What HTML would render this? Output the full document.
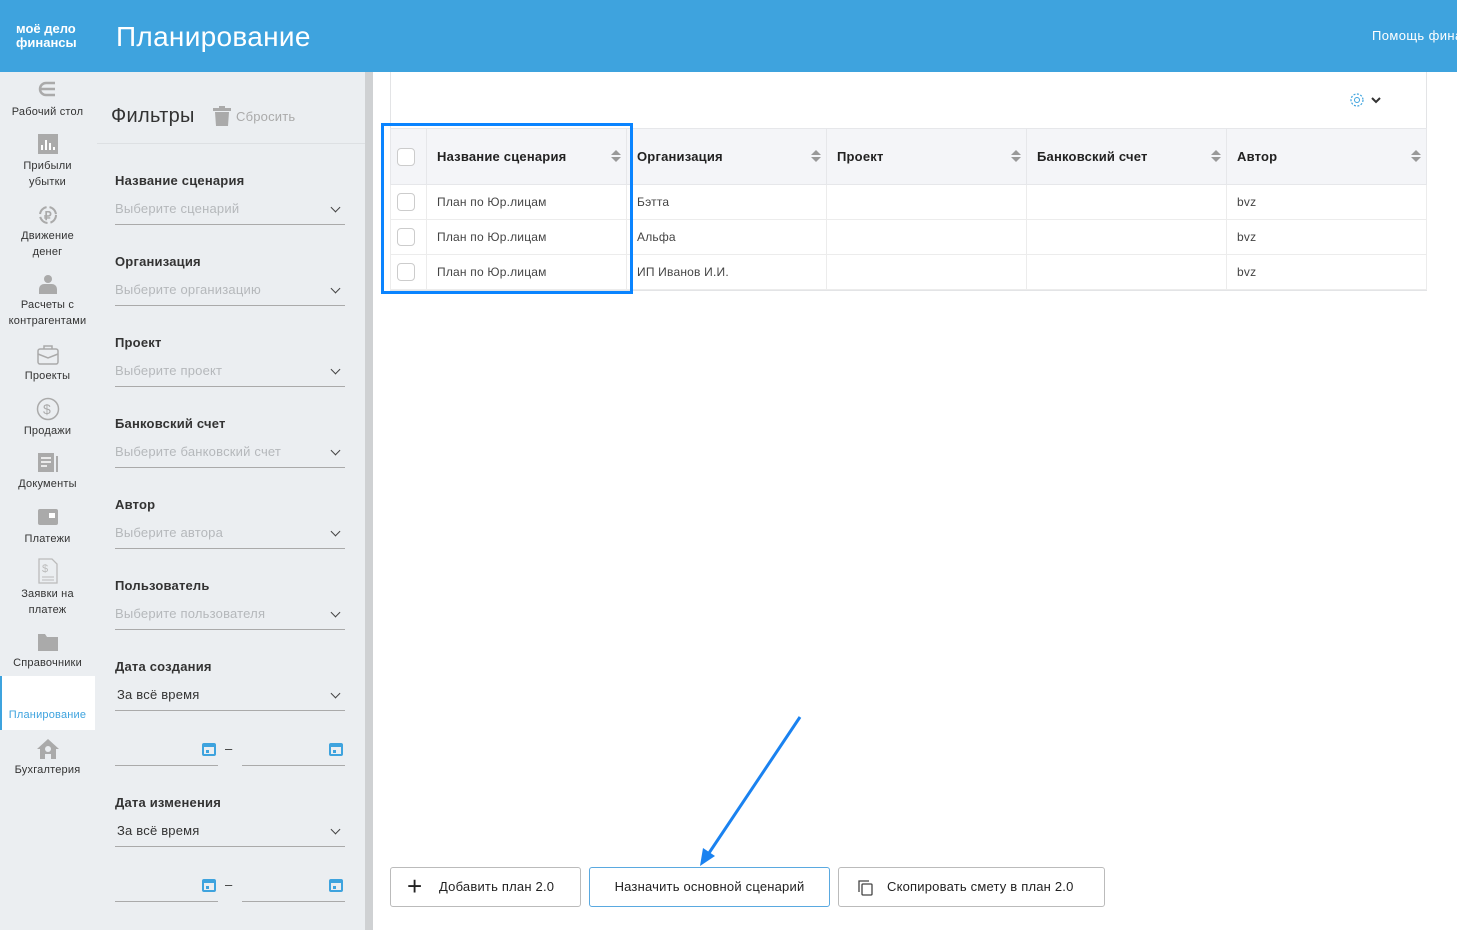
<!DOCTYPE html>
<html><head><meta charset="utf-8"><style>
*{box-sizing:border-box;margin:0;padding:0}
body{width:1457px;height:930px;overflow:hidden;background:#fff;font-family:"Liberation Sans","Noto Sans CJK SC",sans-serif;position:relative;color:#333}
.abs{position:absolute}
.hdr{left:0;top:0;width:1457px;height:72px;background:#3ea3de}
.nav{left:0;top:72px;width:97px;height:858px;background:#ebeef1}
.flt{left:97px;top:72px;width:268px;height:858px;background:#ebeef1}
.sb{left:365px;top:72px;width:8px;height:858px;background:#cfd1d3}
.ni{position:absolute;left:0;width:95px;text-align:center;font-size:11px;color:#333;line-height:16px;letter-spacing:0.2px}
.ni svg{display:block;margin:0 auto 2px}
.lbl{position:absolute;left:115px;font-size:13px;font-weight:bold;color:#333;letter-spacing:0.2px}
.sel{position:absolute;left:115px;width:230px;height:30px;border-bottom:1px solid #aaa;font-size:13px;color:#b5b8bb;line-height:28px;letter-spacing:0.2px}
.sel:after{content:"";position:absolute;right:6px;top:9px;width:6px;height:6px;border-right:1.3px solid #444;border-bottom:1.3px solid #444;transform:rotate(45deg)}
.dt{position:absolute;height:22px;border-bottom:1px solid #aaa;width:103px}
.cal{position:absolute;width:14px;height:13px;border:2px solid #3ea3de;border-top-width:4px;border-radius:2px}
.cal:after{content:"";position:absolute;left:2px;top:3px;width:3px;height:3px;background:#3ea3de}
table{border-collapse:collapse;position:absolute;left:390px;top:128px;width:1037px;font-size:12px;letter-spacing:0.2px}
th{background:#f4f5f8;height:56px;text-align:left;font-weight:bold;font-size:13px;color:#222;border:1px solid #e6e7ea;padding-left:10px;position:relative}
td{height:35px;border:1px solid #ececec;padding-left:10px;color:#444}
.cb{width:18px;height:18px;border:1px solid #ccc;border-radius:4px;background:#fff;display:block;margin-left:-2px}
.srt{position:absolute;right:10px;top:21px;width:0;height:0}
.srt:before,.srt:after{content:"";position:absolute;left:-5px;border-left:5px solid transparent;border-right:5px solid transparent}
.srt:before{top:0;border-bottom:5px solid #999}
.srt:after{top:7px;border-top:5px solid #999}
.btn{position:absolute;top:867px;height:40px;border:1px solid #bbb;border-radius:3px;font-size:13px;color:#222;line-height:38px;background:#fff;letter-spacing:0.2px}
</style></head><body>
<div class="abs hdr"></div>
<div class="abs" style="left:16px;top:22px;color:#fff;font-size:13px;line-height:14px;font-weight:bold">моё дело<br>финансы</div>
<div class="abs" style="left:116px;top:21px;color:#fff;font-size:28px;letter-spacing:0.3px">Планирование</div>
<div class="abs" style="left:1372px;top:28px;color:#fff;font-size:13px;white-space:nowrap;letter-spacing:0.4px">Помощь финансиста</div>

<div class="abs nav"></div>
<div class="abs flt"></div>
<div class="abs sb"></div>

<div class="ni" style="top:80px"><svg width="22" height="22" viewBox="0 0 22 22"><path d="M18 3H9a6 6 0 0 0 0 12h9M4 9h14" stroke="#aaa" stroke-width="2.5" fill="none"/></svg>Рабочий стол</div>
<div class="ni" style="top:134px"><svg width="22" height="22"><rect width="20" height="20" x="1" fill="#aaa"/><path d="M5 16v-5M9 16V6M13 16v-7M17 16v-3" stroke="#fff" stroke-width="2"/></svg>Прибыли<br>убытки</div>
<div class="ni" style="top:204px"><svg width="22" height="22"><circle cx="11" cy="11" r="8" stroke="#aaa" stroke-width="2" fill="none" stroke-dasharray="10 3"/><text x="7" y="16" font-size="12" font-weight="bold" fill="#aaa">₽</text></svg>Движение<br>денег</div>
<div class="ni" style="top:273px"><svg width="22" height="22"><circle cx="11" cy="6" r="4" fill="#aaa"/><path d="M2 21v-5a5 5 0 0 1 5-5h8a5 5 0 0 1 5 5v5z" fill="#aaa"/></svg>Расчеты с<br>контрагентами</div>
<div class="ni" style="top:344px"><svg width="24" height="22"><rect x="2" y="5" width="20" height="15" rx="2" stroke="#aaa" stroke-width="1.5" fill="none"/><path d="M8 5V2h8v3M2 10l10 4 10-4" stroke="#aaa" stroke-width="1.5" fill="none"/></svg>Проекты</div>
<div class="ni" style="top:397px"><svg width="24" height="24"><circle cx="12" cy="12" r="10.5" stroke="#aaa" stroke-width="1.5" fill="none"/><text x="7" y="17" font-size="14" fill="#aaa">$</text></svg>Продажи</div>
<div class="ni" style="top:452px"><svg width="22" height="22"><rect x="1" y="1" width="16" height="19" fill="#aaa"/><rect x="19" y="4" width="2" height="16" fill="#aaa"/><path d="M4 6h10M4 10h10M4 14h6" stroke="#fff" stroke-width="1.5"/></svg>Документы</div>
<div class="ni" style="top:507px"><svg width="22" height="22"><rect x="1" y="2" width="20" height="16" rx="2" fill="#aaa"/><rect x="12" y="6" width="6" height="5" fill="#fff"/></svg>Платежи</div>
<div class="ni" style="top:558px"><svg width="22" height="26"><path d="M2 1h13l5 5v19H2z" stroke="#bbb" fill="none" stroke-width="1.3"/><text x="5" y="14" font-size="11" fill="#bbb">$</text><path d="M5 19h12M5 22h12" stroke="#bbb"/></svg>Заявки на<br>платеж</div>
<div class="ni" style="top:631px"><svg width="22" height="22"><path d="M1 3h7l2 3h11v14H1z" fill="#aaa"/></svg>Справочники</div>
<div class="abs" style="left:0;top:676px;width:95px;height:54px;background:#fff;border-left:2px solid #3ea3de"></div>
<div class="ni" style="top:707px;color:#3ea3de">Планирование</div>
<div class="ni" style="top:738px"><svg width="24" height="22"><path d="M12 1L1 11h3v10h5v-5h6v5h5V11h3z" fill="#aaa"/><circle cx="12" cy="11" r="3" fill="#ebeef1"/></svg>Бухгалтерия</div>

<div class="abs" style="left:111px;top:105px;font-size:20px;color:#333;letter-spacing:0.3px">Фильтры</div>
<svg class="abs" style="left:213px;top:106px" width="18" height="20"><rect x="0" y="2" width="18" height="3" fill="#aaa"/><rect x="6" y="0" width="6" height="3" fill="#aaa"/><path d="M2 6h14l-1 14H3z" fill="#aaa"/></svg>
<div class="abs" style="left:236px;top:109px;font-size:13px;color:#aaa;letter-spacing:0.2px">Сбросить</div>
<div class="abs" style="left:97px;top:143px;width:268px;height:1px;background:#dde0e3"></div>

<div class="lbl" style="top:173px">Название сценария</div><div class="sel" style="top:195px">Выберите сценарий</div>
<div class="lbl" style="top:254px">Организация</div><div class="sel" style="top:276px">Выберите организацию</div>
<div class="lbl" style="top:335px">Проект</div><div class="sel" style="top:357px">Выберите проект</div>
<div class="lbl" style="top:416px">Банковский счет</div><div class="sel" style="top:438px">Выберите банковский счет</div>
<div class="lbl" style="top:497px">Автор</div><div class="sel" style="top:519px">Выберите автора</div>
<div class="lbl" style="top:578px">Пользователь</div><div class="sel" style="top:600px">Выберите пользователя</div>
<div class="lbl" style="top:659px">Дата создания</div><div class="sel" style="top:681px;color:#333;padding-left:2px">За всё время</div>
<div class="dt" style="left:115px;top:744px"></div><div class="cal" style="left:202px;top:743px"></div>
<div class="abs" style="left:225px;top:741px;font-size:13px">–</div>
<div class="dt" style="left:242px;top:744px"></div><div class="cal" style="left:329px;top:743px"></div>
<div class="lbl" style="top:795px">Дата изменения</div><div class="sel" style="top:817px;color:#333;padding-left:2px">За всё время</div>
<div class="dt" style="left:115px;top:880px"></div><div class="cal" style="left:202px;top:879px"></div>
<div class="abs" style="left:225px;top:877px;font-size:13px">–</div>
<div class="dt" style="left:242px;top:880px"></div><div class="cal" style="left:329px;top:879px"></div>

<div class="abs" style="left:390px;top:72px;width:1037px;height:219px;border:1px solid #e3e4e6;border-top:none"></div>
<svg class="abs" style="left:1349px;top:91px" width="36" height="18"><circle cx="8" cy="9" r="6" stroke="#3ea3de" fill="none" stroke-width="1.2" stroke-dasharray="2 1.5"/><circle cx="8" cy="9" r="2.5" stroke="#3ea3de" fill="none"/><path d="M23 7l4 4 4-4" stroke="#333" stroke-width="2" fill="none"/></svg>

<table>
<tr><th style="width:36px;padding-left:8px"><span class="cb"></span></th><th style="width:200px">Название сценария<span class="srt"></span></th><th style="width:200px">Организация<span class="srt"></span></th><th style="width:200px">Проект<span class="srt"></span></th><th style="width:200px">Банковский счет<span class="srt"></span></th><th>Автор<span class="srt"></span></th></tr>
<tr><td style="padding-left:8px"><span class="cb"></span></td><td>План по Юр.лицам</td><td>Бэтта</td><td></td><td></td><td>bvz</td></tr>
<tr><td style="padding-left:8px"><span class="cb"></span></td><td>План по Юр.лицам</td><td>Альфа</td><td></td><td></td><td>bvz</td></tr>
<tr><td style="padding-left:8px"><span class="cb"></span></td><td>План по Юр.лицам</td><td>ИП Иванов И.И.</td><td></td><td></td><td>bvz</td></tr>
</table>
<div class="abs" style="left:381px;top:123px;width:252px;height:171px;border:3px solid #0a84ff"></div>

<div class="btn" style="left:390px;width:191px"><span style="position:absolute;left:16px;top:-1px;font-size:26px;font-weight:300">+</span><span style="position:absolute;left:48px">Добавить план 2.0</span></div>
<div class="btn" style="left:589px;width:241px;border-color:#5aa9e0;text-align:center">Назначить основной сценарий</div>
<div class="btn" style="left:838px;width:267px"><svg style="position:absolute;left:19px;top:12px" width="16" height="16"><path d="M1 12V1h10" stroke="#444" fill="none" stroke-width="1.3"/><rect x="4" y="4" width="10" height="11" rx="1" stroke="#444" fill="none" stroke-width="1.3"/></svg><span style="position:absolute;left:48px">Скопировать смету в план 2.0</span></div>

<svg class="abs" style="left:690px;top:710px" width="120" height="165"><path d="M110 7L17 146" stroke="#1a82f0" stroke-width="3"/><path d="M10 156L13 138L25 146z" fill="#1a82f0"/></svg>
</body></html>
